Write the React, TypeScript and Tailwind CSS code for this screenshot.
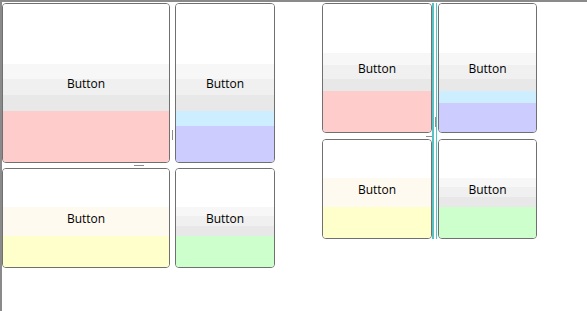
type Band = { color: string; h: number };

function GlassButton({ w, h, bands }: { w: string; h: string; bands: Band[] }) {
  return (
    <button
      type="button"
      className={`relative flex shrink-0 flex-col overflow-hidden rounded-[4px] border border-[#707070] bg-white p-0 ${w} ${h}`}
    >
      {bands.map((b, i) => (
        <div key={i} className="w-full shrink-0" style={{ height: b.h, background: b.color }} />
      ))}
      {/* label sits over the gradient bands */}
      <span className="absolute inset-0 flex items-center justify-center pt-px text-[12px] leading-none text-black">
        Button
      </span>
    </button>
  );
}

const tallGrey = (top: number, a: number, b: number, c: number): Band[] => [
  { color: "#ffffff", h: top },
  { color: "#f7f7f7", h: a },
  { color: "#f0f0f0", h: b },
  { color: "#e8e8e8", h: c },
];

export default function App() {
  return (
    <div
      className="flex h-[311px] w-[587px] items-start border-l-2 border-t-2 border-[#8a8a8a] bg-white pt-px"
      style={{ fontFamily: '"Open Sans", "Noto Sans", sans-serif' }}
    >
      {/* left splitter grid */}
      <div className="flex flex-col">
        <div className="flex">
          <GlassButton
            w="w-[168px]"
            h="h-[160px]"
            bands={[...tallGrey(60, 15, 16, 16), { color: "#ffcccc", h: 51 }]}
          />
          <div className="relative w-[5px]">
            <div className="absolute left-[2px] top-[127px] h-[10px] w-px bg-[#8c8c8c]" />
          </div>
          <GlassButton
            w="w-[100px]"
            h="h-[160px]"
            bands={[...tallGrey(60, 15, 16, 16), { color: "#cceeff", h: 15 }, { color: "#ccccff", h: 36 }]}
          />
        </div>
        <div className="relative h-[5px]">
          <div className="absolute left-[132px] top-[2px] h-px w-[10px] bg-[#8c8c8c]" />
        </div>
        <div className="flex">
          <GlassButton
            w="w-[168px]"
            h="h-[100px]"
            bands={[{ color: "#ffffff", h: 38 }, { color: "#fffaf0", h: 29 }, { color: "#ffffcc", h: 31 }]}
          />
          <div className="w-[5px]" />
          <GlassButton
            w="w-[100px]"
            h="h-[100px]"
            bands={[...tallGrey(38, 9, 10, 10), { color: "#ccffcc", h: 31 }]}
          />
        </div>
      </div>

      {/* right splitter grid */}
      <div className="ml-[47px] flex">
        <div className="flex flex-col">
          <GlassButton
            w="w-[110px]"
            h="h-[130px]"
            bands={[...tallGrey(49, 12, 14, 12), { color: "#ffcccc", h: 41 }]}
          />
          <div className="relative h-[6px]">
            <div className="absolute right-0 top-[3px] h-px w-[6px] bg-[#8c8c8c]" />
          </div>
          <GlassButton
            w="w-[110px]"
            h="h-[100px]"
            bands={[{ color: "#ffffff", h: 38 }, { color: "#fffaf0", h: 29 }, { color: "#ffffcc", h: 31 }]}
          />
        </div>
        <div className="relative h-[236px] w-[6px] border-l-2 border-[#55c3c3] bg-white">
          <div className="absolute left-[2px] top-0 h-full w-px bg-[#55c3c3]" />
          <div className="absolute left-px top-[114px] h-[10px] w-px bg-[#8c8c8c]" />
        </div>
        <div className="flex flex-col">
          <GlassButton
            w="w-[99px]"
            h="h-[130px]"
            bands={[...tallGrey(49, 12, 14, 12), { color: "#cceeff", h: 12 }, { color: "#ccccff", h: 29 }]}
          />
          <div className="h-[6px]" />
          <GlassButton
            w="w-[99px]"
            h="h-[100px]"
            bands={[...tallGrey(38, 9, 10, 10), { color: "#ccffcc", h: 31 }]}
          />
        </div>
      </div>
    </div>
  );
}
